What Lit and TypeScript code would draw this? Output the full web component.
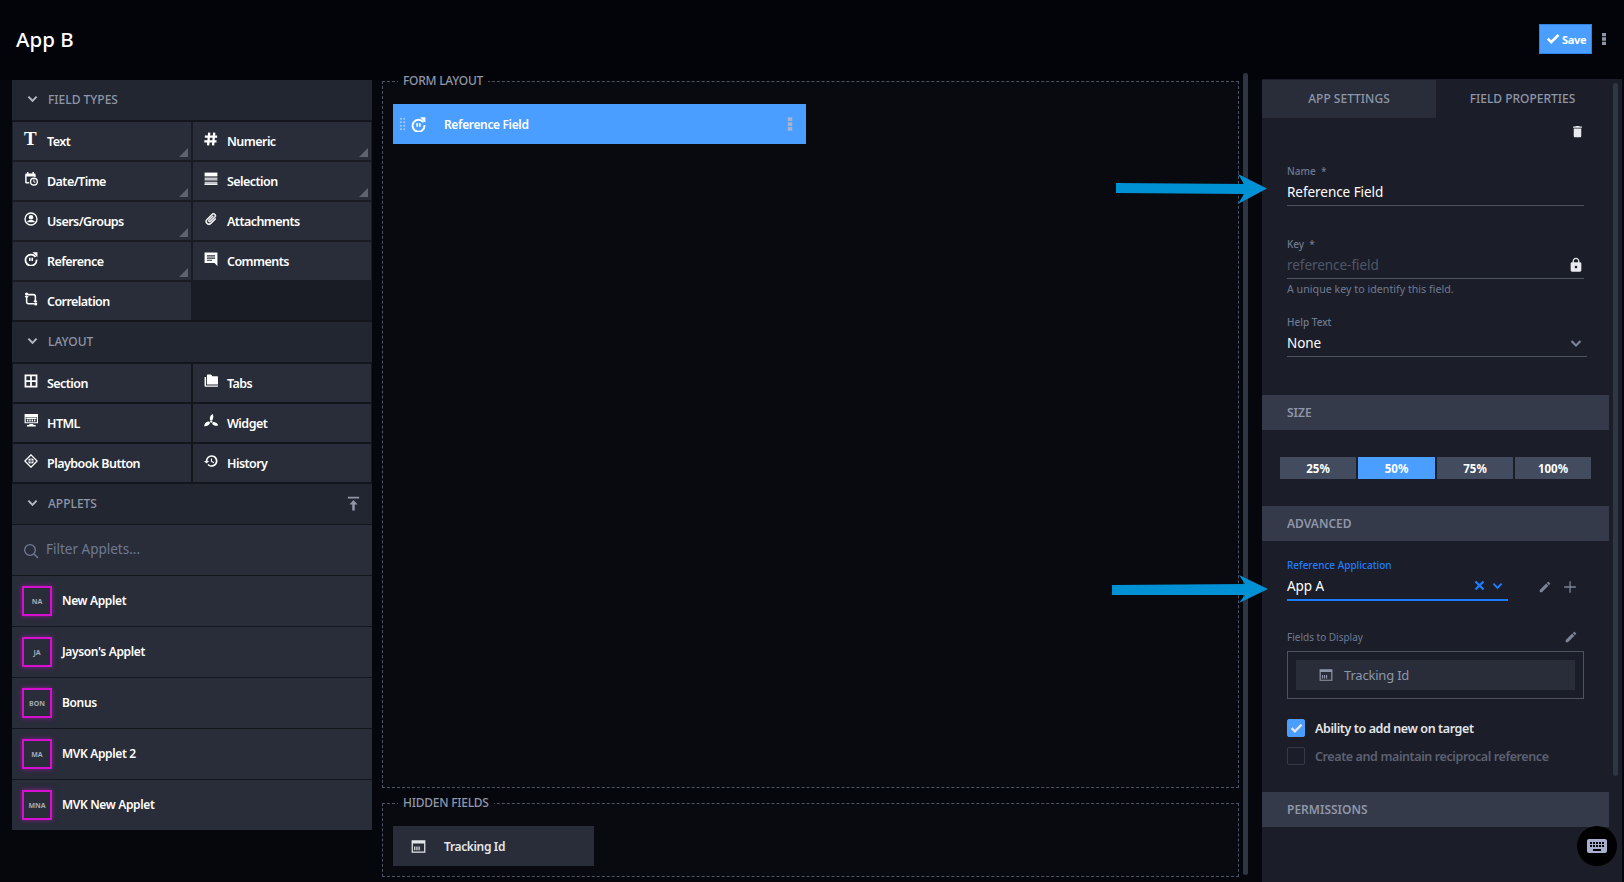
import { LitElement, html, css, svg } from 'lit';
import { customElement } from 'lit/decorators.js';

const ICONS: Record<string, unknown> = {
  numeric: svg`<path d="M9 1 7 23M17.500 1l-2 22M1.500 8h21M.5 16h21" fill="none" stroke="currentColor" stroke-width="4"/>`,
  date: svg`<path d="M5 0h2.500v2.500h7V0H17v2.500h1a2 2 0 0 1 2 2v4h-2.500V7.500h-13V17H9v2.500H4a2 2 0 0 1-2-2v-13a2 2 0 0 1 2-2h1z"/><circle cx="17" cy="16.500" r="5.800" fill="none" stroke="currentColor" stroke-width="2.200"/><path d="M16.200 13h1.600v3.200l2 1.200-.8 1.300-2.800-1.700z"/>`,
  selection: svg`<path d="M1 1h22v6.500H1z"/><path d="M1 9.500h22v5H1zM1 16.500h22V22H1z" opacity=".72"/><path d="M1 20.500h22V22H1z"/>`,
  users: svg`<circle cx="12" cy="12" r="10.200" fill="none" stroke="currentColor" stroke-width="2.400"/><circle cx="12" cy="9" r="3.800"/><path d="M5 17.500c1.200-2.800 4-3.700 7-3.700s5.800.9 7 3.700z"/>`,
  attach: svg`<g transform="rotate(45 12 12)"><path d="M16.500 6v11.500c0 2.210-1.790 4-4 4s-4-1.790-4-4V5c0-1.380 1.120-2.500 2.500-2.500s2.500 1.120 2.500 2.500v10.500c0 .55-.45 1-1 1s-1-.45-1-1V6H10v9.500c0 1.380 1.120 2.500 2.500 2.500s2.500-1.120 2.500-2.500V5c0-2.210-1.790-4-4-4S7 2.790 7 5v12.500c0 3.040 2.460 5.500 5.500 5.500s5.500-2.460 5.500-5.500V6h-1.500z" stroke="currentColor" stroke-width="1.100"/></g>`,
  reference: svg`<path d="M19.800 8.500A9.500 9.500 0 1 0 21.500 13" fill="none" stroke="currentColor" stroke-width="3"/><path d="M14.500 .5h8.500V9z"/><path d="M8.500 10h2.800v5.500H8.500zM12.700 10h2.800v5.500h-2.800z"/>`,
  comments: svg`<path fill-rule="evenodd" d="M1 1h22v23l-5-5H1zM5 5.500v2h14v-2zm0 4v2h14v-2zm0 4V15h9v-1.500z"/>`,
  correlation: svg`<path d="M7 4.500h9a3.500 3.500 0 0 1 3.500 3.500v9M17 20H8a3.500 3.500 0 0 1-3.500-3.500V7" fill="none" stroke="currentColor" stroke-width="2.600"/><circle cx="4.500" cy="3.500" r="2.800"/><circle cx="20" cy="20.500" r="2.800"/><path d="M1 7h7l-3.500 4.500zM16 17h7l-3.500-4.500z"/>`,
  section: svg`<path fill-rule="evenodd" d="M1 1h22v22H1zm3 3v6.500h6.500V4zm9.500 0v6.500H20V4zM4 13.500V20h6.500v-6.500zm9.500 0V20H20v-6.500z"/>`,
  tabs: svg`<path d="M6 1h6l2.500 3H23a1 1 0 0 1 1 1v13H6a1 1 0 0 1-1-1V2a1 1 0 0 1 1-1z"/><path d="M1 5v15a2 2 0 0 0 2 2h21v-2.500H3.500V5z"/>`,
  html: svg`<path fill-rule="evenodd" d="M1 0h23v16H1zm2 5v9h19V5z"/><path d="M4 6h17v2.500H4zM5 9.500h2.500V13H5zM9 9.500h2.500V13H9zM13 9.500h2.500V13H13zM17 9.500h2.500V13H17zM9 17h7v2h4v2.500H5V19h4z"/>`,
  widget: svg`<circle cx="12.500" cy="13" r="2"/><path d="M10.800 11C9 7 10.500 2.500 14.500 0c2.500 3.500 1.500 8-.8 11zM15 14c4-.5 7.500 1 9.500 5.500-4 1.500-8 .5-10.500-3zM10.500 15c-1.500 4-5 6.500-10 6 0-4.500 3.500-8 8.500-8z"/>`,
  playbook: svg`<path d="M12 1.500 22.500 12 12 22.500 1.500 12z" fill="none" stroke="currentColor" stroke-width="2.400"/><circle cx="12" cy="12" r="4.800"/><path d="M12 5v14M5 12h14" stroke="#282d39" stroke-width="1.400"/>`,
  history: svg`<path d="M13 2a10 10 0 0 0-10 10H0l4.300 4.300L9 12H5.800c0-3.950 3.250-7.200 7.200-7.200s7.200 3.250 7.200 7.200-3.250 7.200-7.200 7.200c-2 0-3.800-.8-5.100-2.100L6 19a10 10 0 1 0 7-17zm-1.200 5.500V13l4.700 2.800.9-1.500-3.700-2.200V7.500h-1.900z"/>`,
  tracking: svg`<path fill-rule="evenodd" d="M1 2h22v20H1zm2 5v13h18V7z"/><path d="M5 12h2v6H5zM8.500 12h2v6h-2zM12 12h2v6h-2z"/>`,
  chevron: svg`<path d="M4.500 6.500 12 14l7.500-7.500 3 3L12 20 1.500 9.500z"/>`,
  check: svg`<path d="M9 20.500 1.500 13l3.200-3.200L9 14.100 19.800 3.300 23 6.500z"/>`,
  trash: svg`<path d="M6 19c0 1.100.9 2 2 2h8c1.100 0 2-.9 2-2V7H6v12zM19 4h-3.500l-1-1h-5l-1 1H5v2h14V4z"/>`,
  lock: svg`<path d="M18 8h-1V6c0-2.760-2.240-5-5-5S7 3.240 7 6v2H6c-1.100 0-2 .9-2 2v10c0 1.100.9 2 2 2h12c1.100 0 2-.9 2-2V10c0-1.100-.9-2-2-2zm-6 9c-1.100 0-2-.9-2-2s.9-2 2-2 2 .9 2 2-.9 2-2 2zm3.100-9H8.900V6c0-1.710 1.390-3.100 3.100-3.100 1.710 0 3.100 1.390 3.100 3.100v2z"/>`,
  edit: svg`<path d="M3 17.250V21h3.750L17.810 9.940l-3.750-3.750L3 17.250zM20.710 7.040c.39-.39.39-1.020 0-1.410l-2.340-2.340c-.39-.39-1.020-.39-1.410 0l-1.830 1.830 3.750 3.750 1.830-1.830z"/>`,
  plus: svg`<path d="M11 2h2.200v8.900H22v2.200h-8.800V22H11v-8.900H2v-2.200h9z"/>`,
  close: svg`<path d="M5 1.500 12 8.500l7-7L22.500 5l-7 7 7 7-3.500 3.500-7-7-7 7L1.500 19l7-7-7-7z"/>`,
  search: svg`<circle cx="10.500" cy="10.500" r="8" fill="none" stroke="currentColor" stroke-width="2"/><path d="M16.500 16.500 22.500 22.500" stroke="currentColor" stroke-width="2.200"/>`,
  pin: svg`<path d="M3 1h18v2.800H3zM12 6.500l6.500 7h-4.500V23h-4v-9.500H5.500z"/>`,
  kebab: svg`<path d="M9 3h6v5H9zM9 9.500h6v5H9zM9 16h6v5H9z"/>`,
  keyboard: svg`<path d="M20 5H4c-1.100 0-1.990.9-1.990 2L2 17c0 1.100.9 2 2 2h16c1.100 0 2-.9 2-2V7c0-1.100-.9-2-2-2zm-9 3h2v2h-2V8zm0 3h2v2h-2v-2zM8 8h2v2H8V8zm0 3h2v2H8v-2zm-1 2H5v-2h2v2zm0-3H5V8h2v2zm9 7H8v-2h8v2zm0-4h-2v-2h2v2zm0-3h-2V8h2v2zm3 3h-2v-2h2v2zm0-3h-2V8h2v2z"/>`,
};

const icon = (name: string, cls = '') =>
  html`<svg class="ic ${cls}" viewBox="0 0 24 24" fill="currentColor">${ICONS[name]}</svg>`;

interface Cell { label: string; icon: string; more?: boolean }

const FIELD_TYPES: Cell[] = [
  { label: 'Text', icon: 'T', more: true },
  { label: 'Numeric', icon: 'numeric', more: true },
  { label: 'Date/Time', icon: 'date', more: true },
  { label: 'Selection', icon: 'selection', more: true },
  { label: 'Users/Groups', icon: 'users', more: true },
  { label: 'Attachments', icon: 'attach' },
  { label: 'Reference', icon: 'reference', more: true },
  { label: 'Comments', icon: 'comments' },
  { label: 'Correlation', icon: 'correlation' },
];

const LAYOUT: Cell[] = [
  { label: 'Section', icon: 'section' },
  { label: 'Tabs', icon: 'tabs' },
  { label: 'HTML', icon: 'html' },
  { label: 'Widget', icon: 'widget' },
  { label: 'Playbook Button', icon: 'playbook' },
  { label: 'History', icon: 'history' },
];

const APPLETS = [
  ['NA', 'New Applet'],
  ['JA', "Jayson's Applet"],
  ['BON', 'Bonus'],
  ['MA', 'MVK Applet 2'],
  ['MNA', 'MVK New Applet'],
];

@customElement('app-root')
export class AppRoot extends LitElement {
  static styles = css`
    :host {
      display: block;
      position: relative;
      height: 882px;
      overflow: hidden;
      background: #05070c;
      color: #fff;
      font-family: 'Noto Sans', 'Open Sans', sans-serif;
      --cell: #282d39;
      --head: #222631;
      --panel: #1b1e28;
      --band: #343a49;
      --blue: #4a9eff;
      --accent: #1e7dff;
      --muted: #6f7a92;
      --title: #8f96a8;
      --rule: #4c5365;
    }
    .ic { display: block; width: 14px; height: 14px; flex-shrink: 0; }

    header {
      height: 80px;
      display: flex;
      align-items: center;
      padding: 0 12px 2px 16px;
      box-sizing: border-box;
      background: #03040a;
    }
    h1 { margin: 0; font-size: 20.500px; font-weight: 500; flex: 1; }
    .save {
      display: flex;
      align-items: center;
      gap: 2px;
      width: 53px;
      height: 30px;
      box-sizing: border-box;
      padding-left: 6px;
      background: var(--blue);
      border: 1px solid #2f83e8;
      font-size: 11px;
      font-weight: 700;
      letter-spacing: -0.3px;
    }
    .save .ic { width: 14px; height: 14px; }
    .kebab { width: 16px; height: 16px; color: #8f96a8; margin-left: 4px; }

    main { display: flex; height: 802px; padding-left: 12px; }

    .side {
      width: 360px;
      height: 750px;
      margin-right: 10px;
      background: #14161e;
      flex-shrink: 0;
    }
    .side-head {
      height: 40px;
      box-sizing: border-box;
      display: flex;
      align-items: center;
      padding: 0 11px 2px 15px;
      background: var(--head);
      color: var(--title);
      font-size: 12px;
      font-weight: 500;
      margin-bottom: 2px;
    }
    .side-head .chev { width: 11px; height: 11px; color: #b4b8c4; margin: -1px 10px 0 0; }
    .side-head span { flex: 1; }
    .side-head .pin { width: 15px; height: 15px; color: #8f96a8; }
    .grid {
      display: grid;
      grid-template-columns: 178px 178px;
      grid-auto-rows: 38px;
      gap: 2px;
      padding: 0 1px;
      margin-bottom: 2px;
      background: #191c25;
    }
    .grid.full { background: #14161e; }
    .cell {
      position: relative;
      display: flex;
      align-items: center;
      padding-left: 11px;
      background: var(--cell);
      font-size: 12.500px;
      font-weight: 600;
      letter-spacing: -0.55px;
    }
    .cell .ic { margin: -4px 9px 0 0; }
    .glyph {
      width: 14px;
      margin: -5px 9px 0 0;
      font: 700 19px/1 'Liberation Serif', serif;
      letter-spacing: 0;
    }
    .cell.more::after {
      content: '';
      position: absolute;
      right: 3px;
      bottom: 3px;
      width: 9px;
      height: 9px;
      background: #5f636e;
      clip-path: polygon(100% 0, 100% 100%, 0 100%);
    }
    .filter {
      height: 50px;
      box-sizing: border-box;
      display: flex;
      align-items: center;
      gap: 7px;
      padding: 0 0 3px 11px;
      background: var(--cell);
      color: var(--muted);
      font-size: 13.500px;
      margin-top: -1px;
    }
    .filter .ic { width: 16px; height: 16px; margin-top: 5px; }
    .applet {
      height: 50px;
      margin-top: 1px;
      display: flex;
      align-items: center;
      gap: 10px;
      padding-left: 10px;
      background: var(--cell);
      font-size: 12px;
      font-weight: 600;
      letter-spacing: -0.35px;
    }
    .applet span { margin-top: -2px; }
    .tile {
      width: 30px;
      height: 30px;
      box-sizing: border-box;
      display: flex;
      align-items: center;
      justify-content: center;
      border: 2px solid #d60fd0;
      box-shadow: 0 0 5px rgba(214, 15, 208, 0.55);
      font-size: 7px;
      font-weight: 700;
      color: #a3a8b5;
      letter-spacing: 0;
    }

    .center { width: 857px; margin-top: -6px; flex-shrink: 0; }
    fieldset {
      margin: 0;
      padding: 16px 10px 0;
      border: 1px dashed var(--rule);
      box-sizing: border-box;
      min-width: 0;
      background: #080a10;
    }
    legend {
      margin-left: 5px;
      padding: 0 5px;
      font-size: 12px;
      line-height: 14px;
      font-weight: 500;
      letter-spacing: -0.25px;
      color: var(--title);
    }
    .form { height: 714px; }
    .hidden { height: 81px; margin-top: 8px; }
    .card {
      height: 40px;
      display: flex;
      align-items: center;
      background: var(--cell);
      font-size: 12px;
      font-weight: 600;
      letter-spacing: -0.35px;
      padding-left: 18px;
      box-sizing: border-box;
    }
    .card .ic { margin-right: 18px; width: 15px; height: 15px; }
    .card.on { width: 413px; background: var(--blue); padding-left: 6px; }
    .card.off { width: 201px; color: #e4e6ea; }
    .grip {
      width: 7px;
      height: 14px;
      margin-right: 5px;
      background-image: radial-gradient(#a5cdfb 1px, transparent 1.200px);
      background-size: 3.500px 3.500px;
    }
    .card .menu { width: 18px; height: 18px; margin: 0 7px 0 auto; color: #a5b4cb; }

    .track {
      width: 5px;
      margin: -7px 0 7px 4px;
      border-radius: 3px;
      background: #2e3543;
      flex-shrink: 0;
    }

    .panel {
      position: relative;
      width: 360px;
      margin-left: 14px;
      margin-top: -1px;
      padding-top: 1px;
      background: var(--panel);
      flex-shrink: 0;
    }
    .panel-track {
      position: absolute;
      top: 4px;
      left: 351px;
      width: 5px;
      height: 693px;
      border-radius: 3px;
      background: #2e3543;
    }
    .tabs { display: flex; height: 38px; }
    .tab {
      display: flex;
      align-items: center;
      justify-content: center;
      padding-bottom: 2px;
      box-sizing: border-box;
      font-size: 12px;
      font-weight: 500;
      color: var(--title);
    }
    .tab:first-child { width: 174px; background: var(--cell); }
    .tab:last-child { width: 173px; }
    .tools { height: 20px; padding: 6px 24px 0 0; display: flex; justify-content: flex-end; margin-bottom: 20px; }
    .tools .ic { width: 15px; height: 15px; color: #e8eaf0; }

    .pane { width: 347px; }
    .form-block { padding: 0 25px; height: 231px; }
    .field { width: 297px; }
    .field + .field { margin-top: 31px; }
    .field.tight { margin-top: 19px; }
    label, .lab {
      display: block;
      height: 14px;
      font-size: 10px;
      line-height: 14px;
      font-weight: 500;
      color: var(--muted);
    }
    .val {
      height: 28px;
      display: flex;
      align-items: center;
      box-sizing: border-box;
      border-bottom: 1px solid var(--rule);
      font-size: 13.500px;
      letter-spacing: -0.05px;
      padding-top: 1px;
    }
    .val span { flex: 1; }
    .val.dim { color: #4f5668; }
    .val .ic { width: 16px; height: 16px; color: #e8eaf0; }
    .val.select { width: 300px; }
    .val.select .ic { width: 12px; height: 12px; color: #7b8499; margin-right: 5px; }
    .hint { margin-top: 3px; font-size: 10.700px; line-height: 14px; color: var(--muted); }

    .band {
      height: 35px;
      display: flex;
      align-items: center;
      padding-left: 25px;
      padding-bottom: 1px;
      box-sizing: border-box;
      background: var(--band);
      font-size: 12px;
      font-weight: 600;
      color: var(--title);
    }
    .sizes {
      display: grid;
      grid-template-columns: 76px 77px 76px 76px;
      gap: 2px;
      padding: 27px 0 27px 18px;
    }
    .sizes div {
      height: 22px;
      display: flex;
      align-items: center;
      justify-content: center;
      background: #434b5e;
      font-size: 11.500px;
      font-weight: 700;
    }
    .sizes .on { background: var(--blue); }

    .advanced { padding: 17px 25px 0; height: 251px; box-sizing: border-box; }
    .pick { display: flex; align-items: center; }
    .pick .val {
      width: 221px;
      height: 29px;
      flex-shrink: 0;
      border-bottom: 2px solid var(--accent);
      padding-top: 0;
    }
    .pick .val .ic { color: var(--accent); width: 11px; height: 11px; margin-left: 7px; }
    .pick .val .ic:last-child { margin-right: 5px; }
    .tool-ic { width: 14px; height: 14px; color: #7b8499; }
    .pick .pen { margin-left: 30px; }
    .pick .add { margin-left: 11px; }
    .lab-row { display: flex; justify-content: space-between; align-items: center; margin-top: 29px; width: 297px; }
    .lab-row .lab { font-weight: 400; }
    .lab-row .tool-ic { margin-right: 6px; }
    .blue { color: var(--accent); }
    .box {
      width: 297px;
      height: 48px;
      box-sizing: border-box;
      margin-top: 7px;
      padding: 8px;
      border: 1px solid var(--rule);
    }
    .box div {
      height: 30px;
      display: flex;
      align-items: center;
      padding-left: 23px;
      background: var(--cell);
      font-size: 13px;
      letter-spacing: -0.2px;
      color: var(--title);
    }
    .box .ic { width: 14px; height: 14px; margin-right: 11px; color: #8f96a8; }
    .check {
      display: flex;
      align-items: center;
      height: 18px;
      gap: 10px;
      font-size: 12.500px;
      font-weight: 600;
      letter-spacing: -0.4px;
      color: #e4e6ea;
      margin-top: 10px;
    }
    .check.first { margin-top: 20px; }
    .check.off { color: #5b6172; }
    .tick {
      width: 18px;
      height: 18px;
      box-sizing: border-box;
      border-radius: 2px;
      border: 1px solid #343a49;
      display: flex;
      align-items: center;
      justify-content: center;
    }
    .tick.on { background: var(--blue); border-color: var(--blue); }
    .tick .ic { width: 13px; height: 13px; }

    .arrow { position: absolute; left: 1100px; width: 180px; height: 40px; }
    .arrow.one { top: 169px; }
    .arrow.two { top: 570px; }
    .kbd {
      position: absolute;
      left: 1577px;
      top: 826px;
      width: 40px;
      height: 40px;
      border-radius: 50%;
      background: #000;
      display: flex;
      align-items: center;
      justify-content: center;
      color: #a6b0cc;
    }
    .kbd .ic { width: 24px; height: 24px; }
  `;

  private _cell(c: Cell) {
    return html`<div class="cell ${c.more ? 'more' : ''}">
      ${c.icon === 'T' ? html`<span class="glyph">T</span>` : icon(c.icon)}
      ${c.label}
    </div>`;
  }

  private _sideHead(title: string, pin = false) {
    return html`<div class="side-head">
      ${icon('chevron', 'chev')}<span>${title}</span>${pin ? icon('pin', 'pin') : ''}
    </div>`;
  }

  render() {
    return html`
      <header>
        <h1>App B</h1>
        <div class="save">${icon('check')}Save</div>
        ${icon('kebab', 'kebab')}
      </header>
      <main>
        <aside class="side">
          ${this._sideHead('FIELD TYPES')}
          <div class="grid">${FIELD_TYPES.map((c) => this._cell(c))}</div>
          ${this._sideHead('LAYOUT')}
          <div class="grid full">${LAYOUT.map((c) => this._cell(c))}</div>
          ${this._sideHead('APPLETS', true)}
          <div class="filter">${icon('search')}Filter Applets...</div>
          ${APPLETS.map(
            ([short, name]) => html`<div class="applet"><div class="tile">${short}</div><span>${name}</span></div>`,
          )}
        </aside>

        <section class="center">
          <fieldset class="form">
            <legend>FORM LAYOUT</legend>
            <div class="card on">
              <div class="grip"></div>
              ${icon('reference')}Reference Field
              ${icon('kebab', 'menu')}
            </div>
          </fieldset>
          <fieldset class="hidden">
            <legend>HIDDEN FIELDS</legend>
            <div class="card off">${icon('tracking')}Tracking Id</div>
          </fieldset>
        </section>
        <div class="track"></div>

        <section class="panel">
          <div class="panel-track"></div>
          <div class="pane">
            <div class="tabs">
              <div class="tab">APP SETTINGS</div>
              <div class="tab">FIELD PROPERTIES</div>
            </div>
            <div class="tools">${icon('trash')}</div>
            <div class="form-block">
              <div class="field">
                <label>Name &nbsp;*</label>
                <div class="val"><span>Reference Field</span></div>
              </div>
              <div class="field">
                <label>Key &nbsp;*</label>
                <div class="val dim"><span>reference-field</span>${icon('lock')}</div>
                <div class="hint">A unique key to identify this field.</div>
              </div>
              <div class="field tight">
                <label>Help Text</label>
                <div class="val select"><span>None</span>${icon('chevron')}</div>
              </div>
            </div>
            <div class="band">SIZE</div>
            <div class="sizes">
              <div>25%</div>
              <div class="on">50%</div>
              <div>75%</div>
              <div>100%</div>
            </div>
            <div class="band">ADVANCED</div>
            <div class="advanced">
              <label class="blue">Reference Application</label>
              <div class="pick">
                <div class="val"><span>App A</span>${icon('close')}${icon('chevron')}</div>
                ${icon('edit', 'tool-ic pen')}${icon('plus', 'tool-ic add')}
              </div>
              <div class="lab-row">
                <div class="lab">Fields to Display</div>
                ${icon('edit', 'tool-ic')}
              </div>
              <div class="box"><div>${icon('tracking')}Tracking Id</div></div>
              <div class="check first">
                <div class="tick on">${icon('check')}</div>
                Ability to add new on target
              </div>
              <div class="check off">
                <div class="tick"></div>
                Create and maintain reciprocal reference
              </div>
            </div>
            <div class="band">PERMISSIONS</div>
          </div>
        </section>
      </main>

      <svg class="arrow one" viewBox="0 0 180 40"><polygon points="16,14 144,15 138,5 167,19.500 138,35 144,25 16,24" fill="#0090d4" /></svg>
      <svg class="arrow two" viewBox="0 0 180 40"><polygon points="12,15 145,14 139,5 168,19 139,33 145,25 12,25" fill="#0090d4" /></svg>
      <div class="kbd">${icon('keyboard')}</div>
    `;
  }
}
